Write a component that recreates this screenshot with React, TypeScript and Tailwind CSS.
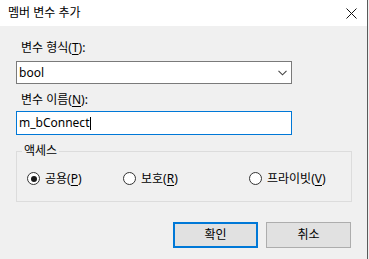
import React from 'react';

const font = "font-['Noto_Sans','Noto_Sans_CJK_KR',sans-serif]";

const Acc = ({ k }: { k: string }) => (
  <>
    (<span className="underline underline-offset-[2px]">{k}</span>)
  </>
);

const Radio = ({ checked, label, k, width }: { checked?: boolean; label: string; k: string; width: string }) => (
  <div className={`flex items-center ${width}`}>
    <span className="w-[13px] h-[13px] rounded-full border border-[#333333] bg-white flex items-center justify-center">
      {checked && <span className="w-[6px] h-[6px] rounded-full bg-[#1a1a1a]" />}
    </span>
    <span className="ml-[5px] text-[12px] leading-[16px] text-black">
      {label}
      <Acc k={k} />
    </span>
  </div>
);

const App: React.FC = () => {
  return (
    <div className={`w-[369px] h-[259px] bg-[#f0f0f0] flex ${font}`}>
      <div className="w-[367px] h-full flex flex-col">
        {/* Title bar */}
        <div className="h-[26px] bg-white flex items-center justify-between pl-[8px] pr-[10px]">
          <span className="text-[12px] text-black leading-none">멤버 변수 추가</span>
          <svg width="11" height="11" viewBox="0 0 11 11">
            <path d="M0.5 0.5 L10.5 10.5 M10.5 0.5 L0.5 10.5" stroke="#111" strokeWidth="1" />
          </svg>
        </div>

        <div className="pl-[16px] flex flex-col">
          <div className="mt-[14px] pl-[5px] text-[12px] leading-[16px] text-black">
            변수 형식<Acc k="T" />:
          </div>

          <div className="mt-[5px] w-[276px] h-[23px] bg-white border border-[#7a7a7a] flex items-center justify-between pl-[2px] pr-[4px]">
            <span className="text-[12px] leading-none text-black">bool</span>
            <svg width="9" height="6" viewBox="0 0 9 6">
              <path d="M0.5 0.8 L4.5 4.8 L8.5 0.8" stroke="#444" strokeWidth="1.1" fill="none" />
            </svg>
          </div>

          <div className="mt-[8px] pl-[5px] text-[12px] leading-[16px] text-black">
            변수 이름<Acc k="N" />:
          </div>

          <div className="mt-[3px] w-[276px] h-[24px] bg-white border border-[#0078d7] flex items-center pl-[2px]">
            <span className="text-[12px] leading-none text-black">m_bConnect</span>
            <span className="ml-[1px] w-px h-[13px] bg-black" />
          </div>

          {/* Group box */}
          <div className="relative mt-[16px] w-[336px] h-[51px] border border-[#dcdcdc] flex items-center pl-[10px] pt-[4px]">
            <span className="absolute left-[5px] top-[-9px] px-[2px] bg-[#f0f0f0] text-[12px] leading-[16px] text-black">
              액세스
            </span>
            <Radio checked label="공용" k="P" width="w-[96px]" />
            <Radio label="보호" k="R" width="w-[126px]" />
            <Radio label="프라이빗" k="V" width="w-[100px]" />
          </div>

          {/* Buttons */}
          <div className="mt-[20px] flex justify-end gap-[8px] pr-[1px] w-[336px]">
            <button className="w-[85px] h-[26px] bg-[#e1e1e1] border-2 border-[#0078d7] text-[12px] text-black">
              확인
            </button>
            <button className="w-[85px] h-[26px] bg-[#e1e1e1] border border-[#adadad] text-[12px] text-black">
              취소
            </button>
          </div>
        </div>
      </div>
      <div className="w-px h-full bg-[#5a5a5a]" />
    </div>
  );
};

export default App;
